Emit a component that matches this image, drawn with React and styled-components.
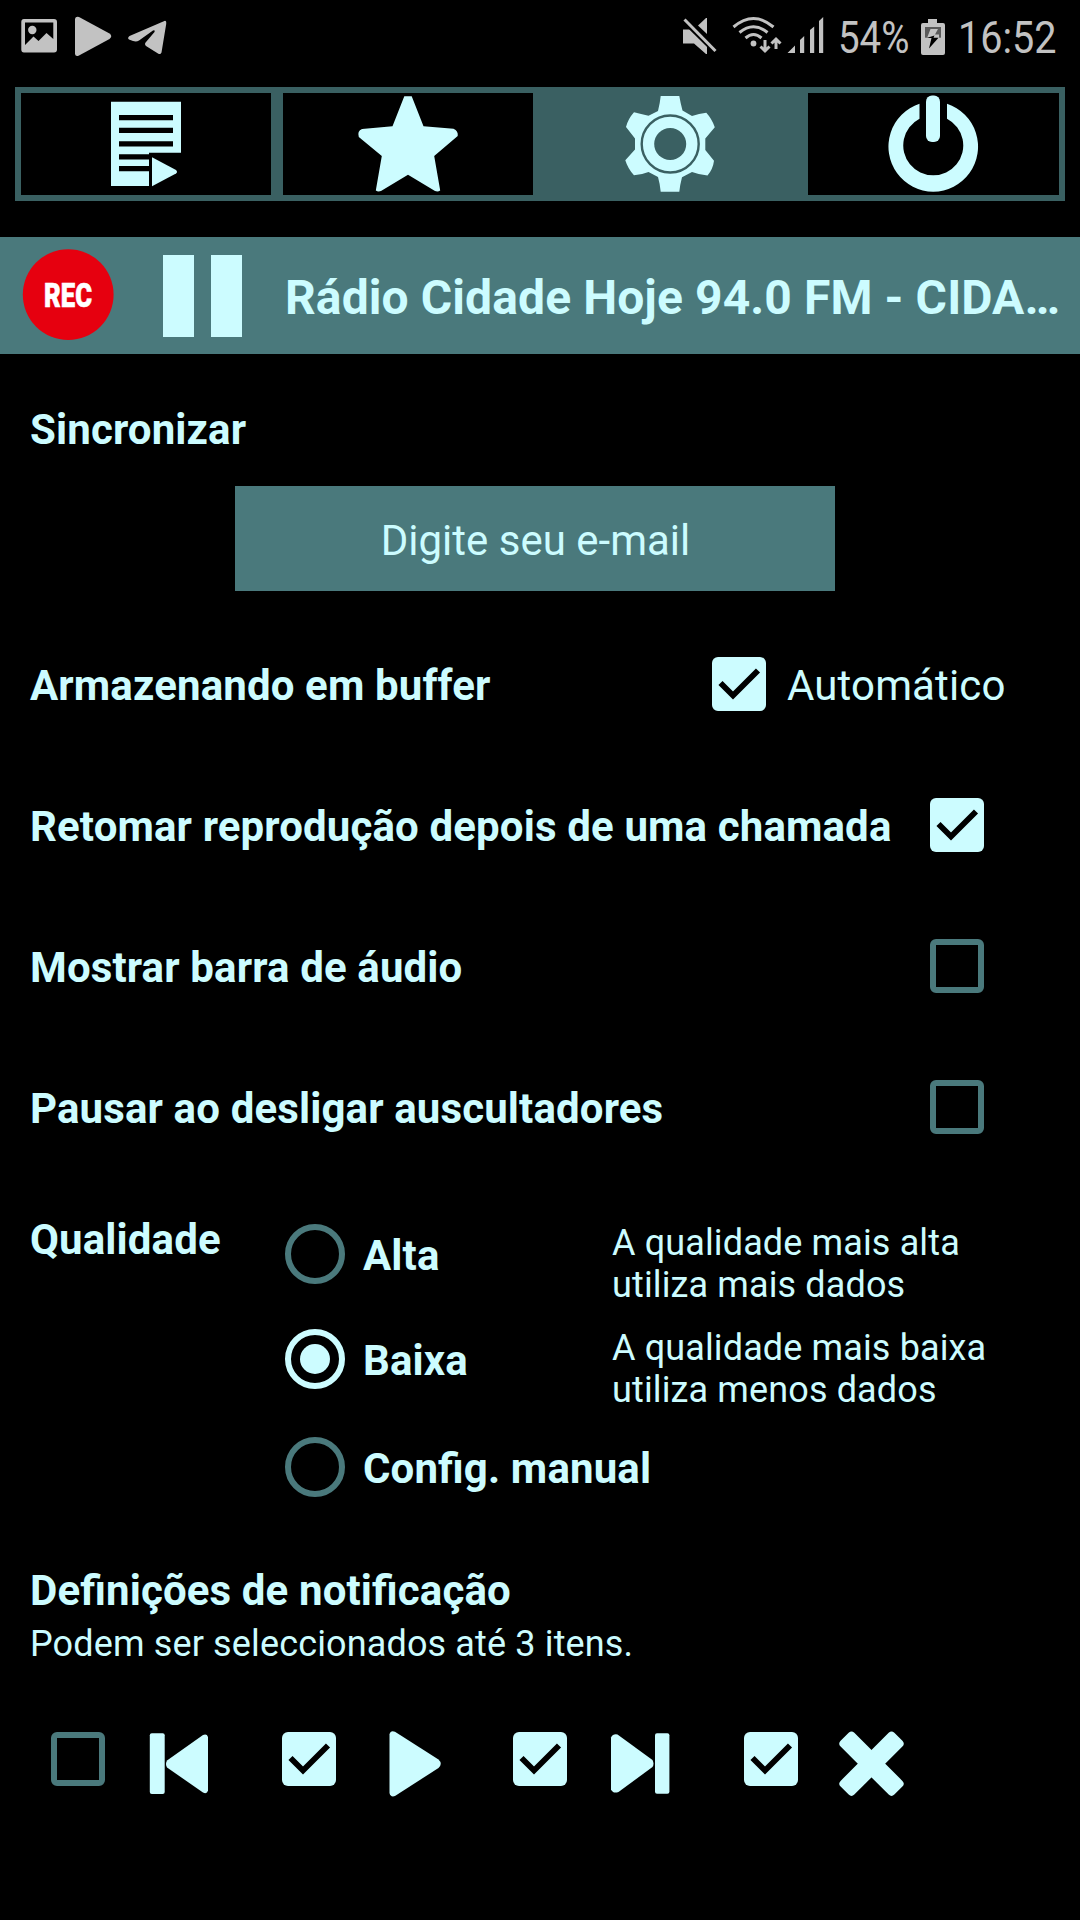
import React, { useState } from 'react'
import styled, { createGlobalStyle } from 'styled-components'

const settingsRows = [
  { id: 'resume', label: 'Retomar reprodução depois de uma chamada' },
  { id: 'audioBar', label: 'Mostrar barra de áudio' },
  { id: 'headphones', label: 'Pausar ao desligar auscultadores' },
]

const qualities = [
  { id: 'high', label: 'Alta', text: ['A qualidade mais alta', 'utiliza mais dados'] },
  { id: 'low', label: 'Baixa', text: ['A qualidade mais baixa', 'utiliza menos dados'] },
  { id: 'manual', label: 'Config. manual' },
]

const ListIcon = () => (
  <svg width="74" height="90" viewBox="109 99 74 90">
    <path fill="#ccfcff" d="M111 101.7H181V152.7H149V186H111Z" />
    <path fill="#000" d="M119 115h54v5.3h-54zM119 127.7h54v5.3h-54zM119 141.3h54v5.3h-54zM119 154.3h31v5.3h-31zM119 166h31v5.3h-31z" />
    <path fill="#ccfcff" d="M152 157.3L176 170Q178 172 176 173.6L152 186.3Z" />
  </svg>
)

const StarIcon = () => (
  <svg width="102" height="102" viewBox="357 93 102 102">
    <path
      fill="#ccfcff"
      d="M404.3 96.3H411.7L423.5 126.3L453.5 128.7Q458.5 131 457.7 136L434.2 156L440.2 190.5Q438 192 435 191L408 174.7L381 191Q378 192 375.8 190.5L381.8 156L358.8 137Q357 131 362 129L392.5 126.3Z"
    />
  </svg>
)

const GearIcon = () => (
  <svg width="95" height="100" viewBox="623 94 95 100">
    <path
      fill="#ccfcff"
      d="M660.7 96H679.3Q680.5 103 682.5 110.5L692 116Q699 113.5 706.3 112.8Q712 119 714.8 127.3L705.3 138.5V150L714 160.7Q713 169 707.5 175.5Q700 175 692 172L682 177.3Q680 185 679.3 191.8H660.7Q660 184 658 177L648.5 172Q641 175 634 175.3Q628 169 625.3 160.3L635 149.5V138.5L626 127Q628 119 634 112.3Q641 114 648.5 115.8L658 111Q660 103 660.7 96Z"
    />
    <circle cx="670.2" cy="144" r="28.5" fill="none" stroke="#3a6062" strokeWidth="2.4" />
    <circle cx="670.2" cy="144" r="16" fill="#3a6062" />
  </svg>
)

const PowerIcon = () => (
  <svg width="91" height="98" viewBox="888 95 91 98">
    <path fill="#ccfcff" d="M947 103.8A44.8 45 0 1 1 919.5 103.8V118.7A30 30 0 1 0 947 118.7Z" />
    <rect x="926" y="95.5" width="14" height="46.4" rx="6" fill="#ccfcff" />
  </svg>
)

const NotificationIcons = () => (
  <svg width="148" height="42" viewBox="20 16 148 42">
    <g fill="#c2c2c2">
      <path
        fillRule="evenodd"
        d="M24 19H54Q57 19 57 22V49.5Q57 52.5 54 52.5H24Q21.3 52.5 21.3 49.5V22Q21.3 19 24 19ZM25 22.5V45L33.5 36.5L38.5 41L46.5 33L53.3 39V22.5Z"
      />
      <circle cx="32.3" cy="30" r="4.2" />
      <path d="M75 19Q75.500 16 79 17L109.500 33.500Q113 36 109.500 39L79 55.500Q75.500 57 75 54Z" />
      <path d="M165 20.700Q166.500 20.700 166.200 24L161.500 52.500Q160.500 55 158 53.500L146 46Q144 44 146 42L154.500 32Q155.500 29.800 153 30.500L139 40.500Q136.500 42 133 41L129 39.500Q127 38 129.500 36Z" />
    </g>
  </svg>
)

const SignalIcons = () => (
  <svg width="144" height="42" viewBox="682 16 144 42">
    <g fill="#c2c2c2">
      <path d="M683 29.500H690L707 46V54H706L694 43.500H683Z" />
      <path d="M698 25.500L706 18H707V34Z" />
      <path d="M684 20L715 50.500" stroke="#000" strokeWidth="6" />
      <path d="M684.500 19.500L715.500 51" stroke="#c2c2c2" strokeWidth="3" />
      <circle cx="753.500" cy="43.500" r="2.900" />
      <g fill="none" stroke="#c2c2c2" strokeWidth="3">
        <path d="M733.500 27Q753.500 10 773.500 27" />
        <path d="M739.500 32.500Q753.500 21 767.500 32.500" />
        <path d="M745.500 38Q753.500 31 761.500 38" />
        <path d="M765 40V51M760.500 46.500L765 51L769.500 46.500" />
        <path d="M776 49V39M771.500 43.500L776 39L780.500 43.500" />
      </g>
      <path d="M787.500 53L795 45.500V53ZM800 40L804.200 36V53H800ZM810 30L814.200 26.500V53H810ZM819 21L823.200 17V53H819Z" />
    </g>
  </svg>
)

const BatteryIcon = () => (
  <svg width="24" height="36" viewBox="921 18 24 36">
    <path fill="#c2c2c2" d="M928 18H937V22H943Q945 22 945 24V52Q945 54 943 54H923Q921 54 921 52V24Q921 22 923 22H928Z" />
    <rect x="925" y="26" width="16" height="10.700" fill="#5a5a5a" />
    <path fill="#c2c2c2" d="M930.500 28H938L935 33.500H939V37H927Z" />
    <path fill="#000" d="M926.500 37H931.500L929 47.500L938.500 36.700H933.500L934.500 34.500Z" />
  </svg>
)

const actionIcons = {
  previous: (
    <>
      <rect x="6.800" y="5.300" width="14.900" height="60.700" rx="2" />
      <path d="M24 32.500L60 7Q64 5.500 65 9V62.500Q64 66.500 60 64.500L24 39.500Q22 36 24 32.500Z" />
    </>
  ),
  play: <path d="M15.500 6.500Q16.500 2 21 3.800L64.500 31.500Q69 35.700 64.500 40L21 68Q16.500 69.500 15.500 65Z" />,
  next: (
    <>
      <path d="M6 9.500Q8 5.500 12.500 6.500L47.500 32Q49.500 36 47.500 39L13.500 64Q8 66 6 61.500Z" />
      <rect x="50" y="5.300" width="14.400" height="60.400" rx="2" />
    </>
  ),
  close: (
    <g transform="rotate(45 35.500 35.700)">
      <rect x="-2.500" y="26" width="76" height="19.400" rx="4" />
      <rect x="25.800" y="-2.300" width="19.400" height="76" rx="4" />
    </g>
  ),
}

const CheckBox = ({ checked, onClick }) => (
  <Box role="checkbox" aria-checked={checked} $checked={checked} onClick={onClick}>
    {checked && (
      <svg width="54" height="54" viewBox="0 0 54 54">
        <path d="M8.500 26L21 38.500L46 13.500" fill="none" stroke="#000" strokeWidth="5.800" />
      </svg>
    )}
  </Box>
)

const tabs = [
  { id: 'list', icon: <ListIcon /> },
  { id: 'favorites', icon: <StarIcon /> },
  { id: 'settings', icon: <GearIcon /> },
  { id: 'power', icon: <PowerIcon /> },
]

const App = () => {
  const [quality, setQuality] = useState('low')
  const [checks, setChecks] = useState({
    buffer: true,
    resume: true,
    audioBar: false,
    headphones: false,
    previous: false,
    play: true,
    next: true,
    close: true,
  })

  const toggle = (id) => setChecks({ ...checks, [id]: !checks[id] })

  return (
    <>
      <GlobalStyle />
      <Screen>
        <StatusBar>
          <NotificationIcons />
          <StatusRight>
            <SignalIcons />
            <BatteryLevel>54%</BatteryLevel>
            <BatteryIcon />
            <Clock>16:52</Clock>
          </StatusRight>
        </StatusBar>

        <Tabs>
          {tabs.map((tab) => (
            <Tab key={tab.id} $active={tab.id === 'settings'}>
              {tab.icon}
            </Tab>
          ))}
        </Tabs>

        <Player>
          <RecIcon viewBox="22 249 92 91">
            <circle cx="68.2" cy="294.600" r="45.400" fill="#e6000f" />
            <text x="44" y="306.500" textLength="48" lengthAdjust="spacingAndGlyphs">REC</text>
          </RecIcon>
          <Pause>
            <PauseBar />
            <PauseBar />
          </Pause>
          <Station>Rádio Cidade Hoje 94.0 FM - CIDA…</Station>
        </Player>

        <Content>
          <Label>Sincronizar</Label>
          <EmailButton>Digite seu e-mail</EmailButton>

          <Rows>
            <Row $right={76}>
              <Label>Armazenando em buffer</Label>
              <CheckGroup>
                <CheckBox checked={checks.buffer} onClick={() => toggle('buffer')} />
                <Label $light>Automático</Label>
              </CheckGroup>
            </Row>
            {settingsRows.map((row) => (
              <Row key={row.id} $right={96}>
                <Label>{row.label}</Label>
                <CheckBox checked={checks[row.id]} onClick={() => toggle(row.id)} />
              </Row>
            ))}
          </Rows>

          <Quality>
            <Label>Qualidade</Label>
            <Options>
              {qualities.map((item) => (
                <Option key={item.id} onClick={() => setQuality(item.id)}>
                  <Radio $checked={quality === item.id} />
                  <OptionLabel>{item.label}</OptionLabel>
                  {item.text && (
                    <Hint>
                      {item.text[0]}
                      <br />
                      {item.text[1]}
                    </Hint>
                  )}
                </Option>
              ))}
            </Options>
          </Quality>

          <Label>Definições de notificação</Label>
          <Note>Podem ser seleccionados até 3 itens.</Note>

          <Actions>
            {Object.keys(actionIcons).map((id) => (
              <Action key={id}>
                <CheckBox checked={checks[id]} onClick={() => toggle(id)} />
                <ActionIcon viewBox="0 0 80 72">{actionIcons[id]}</ActionIcon>
              </Action>
            ))}
          </Actions>
        </Content>
      </Screen>
    </>
  )
}

const GlobalStyle = createGlobalStyle`
  * {
    box-sizing: border-box;
  }
  body {
    margin: 0;
    background: #000;
    font-family: Roboto, "Liberation Sans", sans-serif;
  }
  svg {
    display: block;
    flex-shrink: 0;
  }
`;

const Screen = styled.div`
  width: 1080px;
  height: 1920px;
  overflow: hidden;
  background: #000;
  color: #ccfcff;
`;

const StatusBar = styled.div`
  display: flex;
  justify-content: space-between;
  align-items: flex-start;
  height: 87px;
  padding: 16px 23px 0 20px;
`;

const StatusRight = styled.div`
  display: flex;
  align-items: center;
  height: 42px;
`;

const StatusText = styled.div`
  padding-top: 2px;
  color: #c2c2c2;
  font-size: 45px;
  line-height: 42px;
  white-space: nowrap;
  transform-origin: left;
`;

const BatteryLevel = styled(StatusText)`
  width: 72px;
  margin: 0 11px 0 12px;
  transform: scaleX(0.855);
`;

const Clock = styled(StatusText)`
  width: 99px;
  margin-left: 13px;
  transform: scaleX(0.88);
`;

const Tabs = styled.div`
  display: grid;
  grid-template-columns: 262px 262px 263px 263px;
  height: 114px;
  margin: 0 15px;
`;

const Tab = styled.div`
  display: flex;
  justify-content: center;
  align-items: center;
  border: 6px solid #3a6062;
  background: ${(props) => (props.$active ? '#3a6062' : '#000')};
`;

const Player = styled.div`
  display: flex;
  align-items: center;
  height: 117px;
  margin-top: 36px;
  padding-left: 22px;
  background: #4a797c;
`;

const RecIcon = styled.svg`
  width: 92px;
  height: 91px;
  margin-bottom: 2px;
  text {
    fill: #fff;
    stroke: #fff;
    stroke-width: 0.6px;
    font-size: 33.5px;
    font-weight: 900;
  }
`;

const Pause = styled.div`
  display: flex;
  gap: 17px;
  margin: 1px 0 0 49px;
`;

const PauseBar = styled.div`
  width: 31px;
  height: 82px;
  background: #ccfcff;
`;

const Station = styled.div`
  margin-left: 43px;
  padding-top: 4px;
  font-size: 48px;
  line-height: 56px;
  font-weight: 700;
  letter-spacing: 0.1px;
  white-space: nowrap;
`;

const Content = styled.div`
  padding: 51px 0 0 30px;
  font-feature-settings: "liga" 1;
`;

const Label = styled.div`
  font-size: 42px;
  line-height: 49px;
  font-weight: ${(props) => (props.$light ? 400 : 700)};
  letter-spacing: 0.13px;
  white-space: nowrap;
`;

const EmailButton = styled.div`
  width: 600px;
  height: 105px;
  margin: 32px 0 0 205px;
  padding: 30px 0 0 1px;
  background: #4a797c;
  font-size: 42px;
  line-height: 49px;
  text-align: center;
`;

const Rows = styled.div`
  display: flex;
  flex-direction: column;
  gap: 87px;
  margin-top: 66px;
`;

const Row = styled.div`
  display: flex;
  justify-content: space-between;
  align-items: center;
  height: 54px;
  padding-right: ${(props) => props.$right}px;
  ${Label} {
    padding-top: 3px;
  }
`;

const CheckGroup = styled.div`
  display: flex;
  align-items: center;
  gap: 21px;
  width: 292px;
`;

const Box = styled.div`
  width: 54px;
  height: 54px;
  flex-shrink: 0;
  border: ${(props) => (props.$checked ? 'none' : '6px solid #4a797c')};
  border-radius: 6px;
  background: ${(props) => (props.$checked ? '#ccfcff' : 'transparent')};
`;

const Quality = styled.div`
  display: grid;
  grid-template-columns: 255px 1fr;
  margin: 81px 0 69px;
`;

const Options = styled.div`
  display: grid;
  grid-template-rows: 105px 108px 62px;
  padding-top: 7px;
`;

const Option = styled.div`
  display: flex;
  align-items: flex-start;
`;

const Radio = styled.div`
  display: flex;
  justify-content: center;
  align-items: center;
  width: 60px;
  height: 60px;
  margin-top: 2px;
  border: 6px solid ${(props) => (props.$checked ? '#ccfcff' : '#4a797c')};
  border-radius: 50%;
  &::after {
    content: '';
    width: 30px;
    height: 30px;
    border-radius: 50%;
    background: ${(props) => (props.$checked ? '#ccfcff' : 'transparent')};
  }
`;

const OptionLabel = styled(Label)`
  width: 249px;
  padding-top: 9px;
  margin-left: 18px;
`;

const Hint = styled.div`
  font-size: 36px;
  line-height: 42px;
  letter-spacing: 0.13px;
  white-space: nowrap;
`;

const Note = styled.div`
  margin-top: 8px;
  font-size: 36px;
  line-height: 42px;
  letter-spacing: 0.14px;
`;

const Actions = styled.div`
  display: grid;
  grid-template-columns: repeat(4, 231px);
  margin: 63px 0 0 21px;
`;

const Action = styled.div`
  display: flex;
  align-items: flex-start;
  ${Box} {
    margin-top: 4px;
  }
`;

const ActionIcon = styled.svg`
  width: 80px;
  height: 72px;
  margin-left: 38px;
  fill: #ccfcff;
`;

export default App
